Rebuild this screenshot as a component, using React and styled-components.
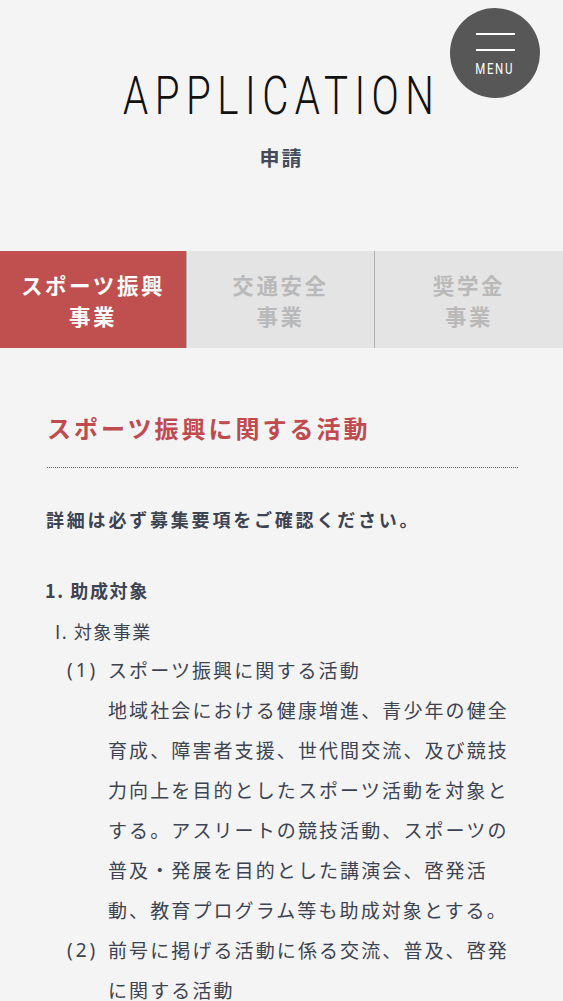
import React from "react";
import styled, { createGlobalStyle } from "styled-components";

const Global = createGlobalStyle`
  html, body { margin: 0; padding: 0; background: #f4f4f4; }
  body { font-family: "Noto Sans CJK JP", "Noto Sans", sans-serif; color: #3c4352; }
  * { box-sizing: border-box; }
`;

const Page = styled.div`
  position: relative;
  width: 563px;
  min-height: 1001px;
  overflow: hidden;
  background: #f4f4f4;
`;

const Header = styled.header`
  display: flex;
  flex-direction: column;
  align-items: center;
  padding-top: 66px;
  height: 251px;
`;

const Title = styled.h1`
  margin: 0 0 0 1px;
  font-family: Roboto, "Liberation Sans", sans-serif;
  font-weight: 300;
  font-size: 53px;
  line-height: 60px;
  letter-spacing: 8.5px;
  color: #111;
  transform: scaleX(0.76);
  white-space: nowrap;
`;

const Subtitle = styled.p`
  margin: 18px 0 0;
  font-size: 20px;
  font-weight: 700;
  letter-spacing: 2px;
  color: #434b5a;
  line-height: 28px;
`;

const MenuButton = styled.button`
  position: absolute;
  top: 8px;
  right: 23px;
  width: 90px;
  height: 90px;
  border-radius: 50%;
  border: none;
  background: #575757;
  display: flex;
  flex-direction: column;
  align-items: center;
  padding: 25px 0 0;
  cursor: pointer;
`;

const Bar = styled.span`
  display: block;
  width: 39px;
  height: 2px;
  background: #fff;
  margin-bottom: 14px;
`;

const MenuLabel = styled.span`
  display: block;
  margin-top: -4px;
  font-family: Roboto, "Liberation Sans", sans-serif;
  font-size: 14px;
  font-weight: 400;
  letter-spacing: 2px;
  color: #fff;
  transform: scaleX(0.82);
`;

const Tabs = styled.nav`
  display: grid;
  grid-template-columns: 186px 188px 1fr;
  height: 97px;
`;

const Tab = styled.div`
  display: flex;
  align-items: center;
  justify-content: center;
  text-align: center;
  font-size: 21.5px;
  font-weight: 700;
  line-height: 31px;
  letter-spacing: 2.6px;
  background: ${(p) => (p.$active ? "#c04f50" : "#e4e4e4")};
  color: ${(p) => (p.$active ? "#fff" : "#b9b9b9")};
  border-left: ${(p) => (p.$first ? "none" : "1px solid #b0b0b0")};
  padding-top: 1px;
`;

const Content = styled.main`
  padding: 60px 45px 0 45px;
`;

const SectionTitle = styled.h2`
  margin: 0 0 0 2px;
  font-size: 24px;
  font-weight: 700;
  letter-spacing: 3px;
  line-height: 40px;
  color: #c04a4d;
  padding-bottom: 19px;
  border-bottom: 1px dotted #666;
`;

const Lead = styled.p`
  margin: 36px 0 0 1px;
  font-size: 18px;
  font-weight: 700;
  letter-spacing: 2.8px;
  line-height: 30px;
  color: #3c4352;
`;

const Heading = styled.h3`
  margin: 41px 0 0;
  font-size: 18px;
  font-weight: 700;
  letter-spacing: 1.6px;
  line-height: 30px;
  color: #3c4352;
`;

const SubHeading = styled.p`
  margin: 11px 0 0 10px;
  font-size: 18px;
  font-weight: 400;
  letter-spacing: 1.5px;
  line-height: 30px;
  color: #3c4352;
`;

const List = styled.ol`
  list-style: none;
  margin: 4px 0 0;
  padding: 0 0 0 22px;
`;

const Item = styled.li`
  display: grid;
  grid-template-columns: 41px 1fr;
  font-size: 19px;
  font-weight: 400;
  letter-spacing: 2.1px;
  line-height: 40px;
  color: #3c4352;
`;

const Num = styled.span`
  font-family: "Noto Sans", sans-serif;
  letter-spacing: 3px;
  white-space: nowrap;
`;

const ItemText = styled.div``;

export default function App() {
  return (
    <Page>
      <Global />
      <MenuButton aria-label="menu">
        <Bar />
        <Bar />
        <MenuLabel>MENU</MenuLabel>
      </MenuButton>
      <Header>
        <Title>APPLICATION</Title>
        <Subtitle>申請</Subtitle>
      </Header>
      <Tabs>
        <Tab $active $first>
          スポーツ振興
          <br />
          事業
        </Tab>
        <Tab>
          交通安全
          <br />
          事業
        </Tab>
        <Tab>
          奨学金
          <br />
          事業
        </Tab>
      </Tabs>
      <Content>
        <SectionTitle>スポーツ振興に関する活動</SectionTitle>
        <Lead>詳細は必ず募集要項をご確認ください。</Lead>
        <Heading>1. 助成対象</Heading>
        <SubHeading>I. 対象事業</SubHeading>
        <List>
          <Item>
            <Num>(1)</Num>
            <ItemText>
              スポーツ振興に関する活動
              <br />
              地域社会における健康増進、青少年の健全育成、障害者支援、世代間交流、及び競技力向上を目的としたスポーツ活動を対象とする。アスリートの競技活動、スポーツの普及・発展を目的とした講演会、啓発活動、教育プログラム等も助成対象とする。
            </ItemText>
          </Item>
          <Item>
            <Num>(2)</Num>
            <ItemText>前号に掲げる活動に係る交流、普及、啓発に関する活動</ItemText>
          </Item>
        </List>
      </Content>
    </Page>
  );
}
